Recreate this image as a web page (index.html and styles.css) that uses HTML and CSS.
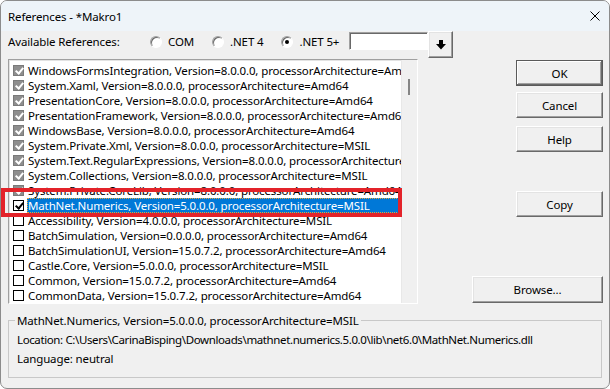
FILE: index.html
```html
<!DOCTYPE html>
<html>
<head>
<meta charset="utf-8"/>
<title>References - *Makro1</title>
<link rel="stylesheet" href="styles.css">
</head>
<body>
<div class="window">
  <div class="titlebar">
    <span class="title">References - *Makro1</span>
    <svg class="close" width="10" height="10" viewBox="0 0 10 10"><path d="M0.5 0.5L9.5 9.5M9.5 0.5L0.5 9.5" stroke="#000" stroke-width="1"/></svg>
  </div>
  <div class="content">
    <div class="toprow">
      <span class="label">Available References:</span>
      <div class="radios">
        <label class="radio"><span class="circle"></span>COM</label>
        <label class="radio"><span class="circle"></span>.NET 4</label>
        <label class="radio"><span class="circle on"></span>.NET 5+</label>
      </div>
      <div class="filter"></div>
      <button class="btn arrow"><svg width="10" height="10" viewBox="0 0 10 10"><path d="M3 0h4v4h3l-5 5.5-5-5.5h3z" fill="#000"/></svg></button>
    </div>
    <div class="main">
      <div class="listbox">
        <div class="items">
          <div class="row"><span class="chk gray"></span><span class="name">WindowsFormsIntegration, Version=8.0.0.0, processorArchitecture=Amd64</span></div>
          <div class="row"><span class="chk gray"></span><span class="name">System.Xaml, Version=8.0.0.0, processorArchitecture=Amd64</span></div>
          <div class="row"><span class="chk gray"></span><span class="name">PresentationCore, Version=8.0.0.0, processorArchitecture=Amd64</span></div>
          <div class="row"><span class="chk gray"></span><span class="name">PresentationFramework, Version=8.0.0.0, processorArchitecture=Amd64</span></div>
          <div class="row"><span class="chk gray"></span><span class="name">WindowsBase, Version=8.0.0.0, processorArchitecture=Amd64</span></div>
          <div class="row"><span class="chk gray"></span><span class="name">System.Private.Xml, Version=8.0.0.0, processorArchitecture=MSIL</span></div>
          <div class="row"><span class="chk gray"></span><span class="name">System.Text.RegularExpressions, Version=8.0.0.0, processorArchitecture=MSIL</span></div>
          <div class="row"><span class="chk gray"></span><span class="name">System.Collections, Version=8.0.0.0, processorArchitecture=MSIL</span></div>
          <div class="row"><span class="chk gray"></span><span class="name">System.Private.CoreLib, Version=8.0.0.0, processorArchitecture=Amd64</span></div>
          <div class="row"><span class="chk black"></span><span class="name selected">MathNet.Numerics, Version=5.0.0.0, processorArchitecture=MSIL</span></div>
          <div class="row"><span class="chk"></span><span class="name">Accessibility, Version=4.0.0.0, processorArchitecture=MSIL</span></div>
          <div class="row"><span class="chk"></span><span class="name">BatchSimulation, Version=0.0.0.0, processorArchitecture=Amd64</span></div>
          <div class="row"><span class="chk"></span><span class="name">BatchSimulationUI, Version=15.0.7.2, processorArchitecture=Amd64</span></div>
          <div class="row"><span class="chk"></span><span class="name">Castle.Core, Version=5.0.0.0, processorArchitecture=MSIL</span></div>
          <div class="row"><span class="chk"></span><span class="name">Common, Version=15.0.7.2, processorArchitecture=Amd64</span></div>
          <div class="row"><span class="chk"></span><span class="name">CommonData, Version=15.0.7.2, processorArchitecture=Amd64</span></div>
        </div>
        <div class="scrollbar"><div class="thumb"></div></div>
      </div>
      <div class="buttons">
        <button class="btn default ok">OK</button>
        <button class="btn cancel">Cancel</button>
        <button class="btn help">Help</button>
        <button class="btn copy">Copy</button>
        <button class="btn browse">Browse...</button>
      </div>
    </div>
    <fieldset class="details">
      <legend>MathNet.Numerics, Version=5.0.0.0, processorArchitecture=MSIL</legend>
      <div class="line loc">Location: C:\Users\CarinaBisping\Downloads\mathnet.numerics.5.0.0\lib\net6.0\MathNet.Numerics.dll</div>
      <div class="line">Language: neutral</div>
    </fieldset>
  </div>
  <div class="mark"></div>
</div>
</body>
</html>
```

FILE: styles.css
```css
body {
  margin: 0;
  background: #fff;
  font-family: "Segoe UI", "Noto Sans", sans-serif;
  font-size: 11.5px;
  letter-spacing: -0.13px;
  color: #000;
}
.window {
  position: relative;
  height: 389px;
  box-sizing: border-box;
  border: 1px solid #8c8c8c;
  border-radius: 7px;
  background: #f0f0f0;
  overflow: hidden;
}
.titlebar {
  height: 30px;
  background: #eef4f9;
  display: flex;
  align-items: center;
  padding-left: 7px;
}
.title {
  flex: 1;
}
.close {
  margin-right: 9px;
}
.content {
  padding: 0 6px 0 7px;
}
/* top row */
.toprow {
  height: 28px;
  display: flex;
  align-items: flex-start;
}
.label {
  flex: none;
  width: 142px;
  margin-top: 2px;
  line-height: 18px;
}
.radios {
  flex: none;
  display: flex;
  gap: 18px;
  width: 188px;
  margin-top: 2px;
  line-height: 18px;
  white-space: nowrap;
}
.radio {
  flex: none;
  display: flex;
  align-items: center;
  gap: 6px;
}
.circle {
  position: relative;
  width: 10px;
  height: 10px;
  border-radius: 50%;
  background: #fff;
  border: 1px solid;
  border-color: #a0a0a0 #fff #fff #a0a0a0;
  box-shadow: inset 1px 1px 0 #696969;
}
.circle.on::after {
  content: "";
  position: absolute;
  left: 3px;
  top: 3px;
  width: 4px;
  height: 4px;
  border-radius: 50%;
  background: #000;
}
.filter {
  flex: none;
  margin: 1px 0 0 11px;
  width: 79px;
  height: 18px;
  box-sizing: border-box;
  background: #fff;
  border: 1px solid;
  border-color: #a0a0a0 #fff #fff #a0a0a0;
  box-shadow: inset 1px 1px 0 #696969;
}
.btn {
  font: inherit;
  letter-spacing: inherit;
  color: #000;
  padding: 0;
  background: #f0f0f0;
  border: 1px solid;
  border-color: #fff #696969 #696969 #fff;
  box-shadow: inset -1px -1px 0 #a0a0a0, inset 1px 1px 0 #e3e3e3;
  box-sizing: border-box;
}
.arrow {
  flex: none;
  width: 25px;
  height: 27px;
  display: flex;
  align-items: center;
  justify-content: center;
}
/* list */
.main {
  display: flex;
  height: 245px;
}
.listbox {
  width: 410px;
  box-sizing: border-box;
  border: 1px solid;
  border-color: #a0a0a0 #fff #fff #a0a0a0;
  box-shadow: inset 1px 1px 0 #e3e3e3;
  background: #fff;
  display: flex;
}
.items {
  flex: 1;
  min-width: 0;
  padding-top: 3px;
  overflow: hidden;
}
.row {
  display: flex;
  align-items: center;
  height: 15px;
  padding-left: 4px;
}
.chk {
  position: relative;
  flex: none;
  width: 11px;
  height: 11px;
  box-sizing: border-box;
  border: 1px solid #000;
  background: #fff;
  margin-right: 3px;
}
.chk.gray {
  background: #8e8e8e;
  border-color: #7a7a7a;
}
.chk.gray::after, .chk.black::after {
  content: "";
  position: absolute;
  left: 3px;
  top: 0px;
  width: 3px;
  height: 6px;
  border: solid #fff;
  border-width: 0 2px 2px 0;
  transform: rotate(40deg);
}
.chk.black::after {
  border-color: #000;
}
.name {
  flex: 1;
  white-space: nowrap;
  line-height: 15px;
  padding-left: 1px;
  box-sizing: border-box;
}
.name.selected {
  background: #0078d7;
  color: #fff;
  outline: 1px dotted #e8a33a;
  outline-offset: -1px;
}
.scrollbar {
  width: 16px;
  flex: none;
  background: #f0f0f0;
  border-left: 1px solid #e8e8e8;
  box-sizing: border-box;
}
.thumb {
  width: 2px;
  height: 16px;
  margin: 19px 0 0 6px;
  background: #858585;
}
/* buttons */
.buttons {
  margin-left: auto;
  display: flex;
  flex-direction: column;
  align-items: flex-end;
}
.buttons .btn {
  width: 87px;
  height: 26px;
}
.default {
  border-color: #5a5a5a;
  box-shadow: inset -1px -1px 0 #696969, inset 1px 1px 0 #fff, inset -2px -2px 0 #a0a0a0;
}
.ok { margin-top: 1px; }
.cancel { margin-top: 6px; }
.help { margin-top: 8px; }
.copy { margin-top: 39px; }
.buttons .browse {
  margin-top: 59px;
  width: 131px;
  height: 27px;
}
/* details */
.details {
  margin: 9px 1px 0 0;
  padding: 2px 8px 9px;
  border: 1px solid #c8c8c8;
  min-width: 0;
}
.details legend {
  padding: 0 2px;
  margin-left: -2px;
  line-height: 15px;
}
.line {
  line-height: 19px;
  white-space: nowrap;
}
.line.loc {
  letter-spacing: -0.38px;
}
.mark {
  position: absolute;
  left: 0;
  top: 187px;
  width: 401px;
  height: 29px;
  box-sizing: border-box;
  border: 4px solid #e3232a;
}
```
